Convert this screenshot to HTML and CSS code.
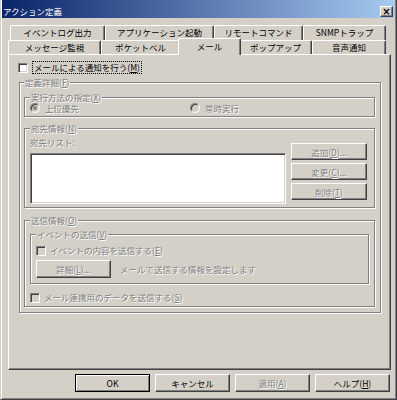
FILE: index.html
```html
<!DOCTYPE html>
<html lang="ja">
<head>
    <meta charset="UTF-8">
    <meta name="viewport" content="width=device-width, initial-scale=1.0">
    <title>アクション定義</title>
    <link rel="stylesheet" href="styles.css">
</head>
<body>
    <div class="window">
        <div class="titlebar">
            <span class="title">アクション定義</span>
            <span class="caption-btn">×</span>
        </div>

        <div class="client">
            <div class="tabs">
                <div class="tab-row row-back">
                    <div class="tab tab-log">イベントログ出力</div>
                    <div class="tab tab-app">アプリケーション起動</div>
                    <div class="tab tab-remote">リモートコマンド</div>
                    <div class="tab tab-snmp">SNMPトラップ</div>
                </div>
                <div class="tab-row row-front">
                    <div class="tab tab-msg">メッセージ監視</div>
                    <div class="tab tab-pager">ポケットベル</div>
                    <div class="tab tab-mail active">メール</div>
                    <div class="tab tab-popup">ポップアップ</div>
                    <div class="tab tab-voice">音声通知</div>
                </div>
            </div>

            <div class="panel">
                <div class="check-row main-check">
                    <span class="checkbox"></span>
                    <span class="focus-label">メールによる通知を行う(<u>M</u>)</span>
                </div>

                <fieldset class="group group-detail">
                    <legend>定義詳細(<u>F</u>)</legend>

                    <fieldset class="group group-exec">
                        <legend>実行方法の指定(<u>X</u>)</legend>
                        <div class="radio-row">
                            <span class="radio-item radio-first"><span class="radio checked"></span>上位優先</span>
                            <span class="radio-item"><span class="radio"></span>常時実行</span>
                        </div>
                    </fieldset>

                    <fieldset class="group group-dest">
                        <legend>宛先情報(<u>N</u>)</legend>
                        <div class="dest-body">
                            <div class="dest-list">
                                <div class="field-label">宛先リスト:</div>
                                <div class="listbox"></div>
                            </div>
                            <div class="dest-buttons">
                                <button class="btn btn-side" disabled>追加(<u>D</u>)...</button>
                                <button class="btn btn-side" disabled>変更(<u>C</u>)...</button>
                                <button class="btn btn-side" disabled>削除(<u>T</u>)</button>
                            </div>
                        </div>
                    </fieldset>

                    <fieldset class="group group-send">
                        <legend>送信情報(<u>O</u>)</legend>

                        <fieldset class="group group-event">
                            <legend>イベントの送信(<u>V</u>)</legend>
                            <div class="check-row event-check">
                                <span class="checkbox"></span>
                                <span>イベントの内容を送信する(<u>E</u>)</span>
                            </div>
                            <div class="detail-row">
                                <button class="btn btn-detail" disabled>詳細(<u>L</u>)...</button>
                                <span>メールで送信する情報を設定します</span>
                            </div>
                        </fieldset>

                        <div class="check-row link-check">
                            <span class="checkbox"></span>
                            <span>メール連携用のデータを送信する(<u>S</u>)</span>
                        </div>
                    </fieldset>
                </fieldset>
            </div>

            <div class="dialog-buttons">
                <button class="btn btn-default">OK</button>
                <button class="btn">キャンセル</button>
                <button class="btn" disabled>適用(<u>A</u>)</button>
                <button class="btn">ヘルプ(<u>H</u>)</button>
            </div>
        </div>
    </div>
</body>
</html>
```

FILE: styles.css
```css
* {
    box-sizing: border-box;
}

body {
    margin: 0;
    padding: 0;
    background-color: #d4d0c8;
    font-family: "Noto Sans CJK JP", "Noto Sans", sans-serif;
    font-size: 8.5px;
    color: #000;
}

u {
    text-decoration: underline;
}

.window {
    width: 397px;
    height: 400px;
    background-color: #d4d0c8;
    border-left: 1px solid #d4d0c8;
    border-right: 1px solid #404040;
    border-bottom: 1px solid #404040;
    box-shadow: inset 1px 0 0 #fff, inset -1px -1px 0 #808080;
}

/* title bar */
.titlebar {
    height: 18px;
    margin: 0 1px;
    padding-top: 5px;
    display: flex;
    align-items: center;
    justify-content: space-between;
    background: linear-gradient(to right, #0a246a, #a6caf0);
}

.title {
    color: #fff;
    padding-left: 1px;
    line-height: 11px;
}

.caption-btn {
    width: 13px;
    height: 11px;
    margin-right: 2px;
    display: flex;
    align-items: center;
    justify-content: center;
    background-color: #d4d0c8;
    border: 1px solid;
    border-color: #fff #404040 #404040 #fff;
    box-shadow: inset -1px -1px 0 #808080;
    font-family: "DejaVu Sans", sans-serif;
    font-size: 10px;
    font-weight: bold;
    line-height: 9px;
}

.client {
    padding: 7px 5px 0 7px;
}

/* tabs */
.tab-row {
    display: flex;
}

.row-back {
    height: 15px;
    margin-left: 2px;
}

.row-front {
    height: 14px;
    align-items: flex-end;
}

.tab {
    height: 100%;
    background-color: #d4d0c8;
    border-top: 1px solid #fff;
    border-left: 1px solid #fff;
    border-right: 1px solid #404040;
    border-radius: 2px 2px 0 0;
    box-shadow: inset -1px 0 0 #808080;
    text-align: center;
    line-height: 12px;
    white-space: nowrap;
}

.tab-log { width: 95px; }
.tab-app { width: 109px; }
.tab-remote { width: 89px; }
.tab-snmp { width: 83px; }

.tab-msg { width: 93px; }
.tab-pager { width: 79px; }
.tab-mail { width: 59px; }
.tab-popup { width: 73px; }
.tab-voice { width: 74px; }

.tab.active {
    position: relative;
    z-index: 1;
    height: 17px;
    width: 63px;
    margin: 0 -2px -1px;
    line-height: 14px;
}

/* panel */
.panel {
    width: 383px;
    height: 316px;
    border: 1px solid;
    border-color: #fff #404040 #404040 #fff;
    box-shadow: inset -1px -1px 0 #808080;
}

.check-row {
    display: flex;
    align-items: center;
    gap: 4px;
    height: 11px;
    line-height: 11px;
    white-space: nowrap;
}

.checkbox {
    width: 10px;
    height: 10px;
    flex-shrink: 0;
    background-color: #d4d0c8;
    border: 1px solid;
    border-color: #808080 #fff #fff #808080;
    box-shadow: inset 1px 1px 0 #404040, inset -1px -1px 0 #d4d0c8;
}

.main-check {
    height: 13px;
    margin: 6px 0 0 9px;
}

.main-check .checkbox {
    background-color: #fff;
}

.focus-label {
    border: 1px dotted #000;
    padding: 0 1px;
    line-height: 11px;
}

/* group boxes */
.group {
    margin: 0;
    min-width: 0;
    padding: 0 5px;
    border: 1px solid #808080;
    box-shadow: inset 1px 1px 0 #fff, 1px 1px 0 #fff;
    color: #808080;
    text-shadow: 1px 1px 0 #fff;
}

.group legend {
    padding: 0 1px;
    line-height: 11px;
    background-color: #d4d0c8;
}

.group-detail {
    width: 362px;
    margin: 3px 0 0 10px;
    padding: 0 5px 5px 4px;
}

.group-exec {
    margin-top: 4px;
    padding-bottom: 3px;
}

.radio-row {
    display: flex;
    height: 10px;
    line-height: 10px;
}

.radio-item {
    display: flex;
    align-items: center;
    gap: 5px;
}

.radio-first {
    width: 160px;
}

.radio {
    width: 10px;
    height: 10px;
    display: flex;
    align-items: center;
    justify-content: center;
    border-radius: 50%;
    background-color: #d4d0c8;
    border: 1px solid;
    border-color: #808080 #fff #fff #808080;
    box-shadow: inset 1px 1px 0 #404040;
}

.radio.checked::after {
    content: "";
    width: 4px;
    height: 4px;
    border-radius: 50%;
    background-color: #808080;
}

.group-dest {
    margin-top: 6px;
    padding: 0 7px 3px 5px;
}

.dest-body {
    display: flex;
    gap: 5px;
}

.dest-list {
    flex: 1;
}

.field-label {
    margin-top: 3px;
    line-height: 11px;
}

.listbox {
    height: 51px;
    margin-top: 5px;
    background-color: #fff;
    border: 1px solid;
    border-color: #808080 #fff #fff #808080;
    box-shadow: inset 1px 1px 0 #404040, inset -1px -1px 0 #d4d0c8;
}

.dest-buttons {
    display: flex;
    flex-direction: column;
    gap: 3px;
    padding-top: 9px;
}

.group-send {
    margin-top: 7px;
    padding: 0 5px 3px;
}

.group-event {
    margin-top: 3px;
    padding-bottom: 5px;
}

.event-check {
    margin-top: 5px;
}

.detail-row {
    display: flex;
    align-items: center;
    gap: 9px;
    margin-top: 4px;
    white-space: nowrap;
}

.link-check {
    margin-top: 8px;
}

/* buttons */
.btn {
    width: 75px;
    height: 18px;
    padding: 0;
    font: inherit;
    line-height: 14px;
    color: #000;
    background-color: #d4d0c8;
    border: 1px solid;
    border-color: #fff #404040 #404040 #fff;
    box-shadow: inset -1px -1px 0 #808080;
    text-shadow: none;
}

.btn:disabled {
    color: #808080;
    text-shadow: 1px 1px 0 #fff;
}

.btn-side {
    width: 76px;
    height: 17px;
}

.btn-default {
    border-color: #000;
    box-shadow: inset 1px 1px 0 #fff, inset -1px -1px 0 #808080;
}

.dialog-buttons {
    display: flex;
    justify-content: flex-end;
    gap: 5px;
    margin-top: 4px;
    padding-right: 1px;
}
```
